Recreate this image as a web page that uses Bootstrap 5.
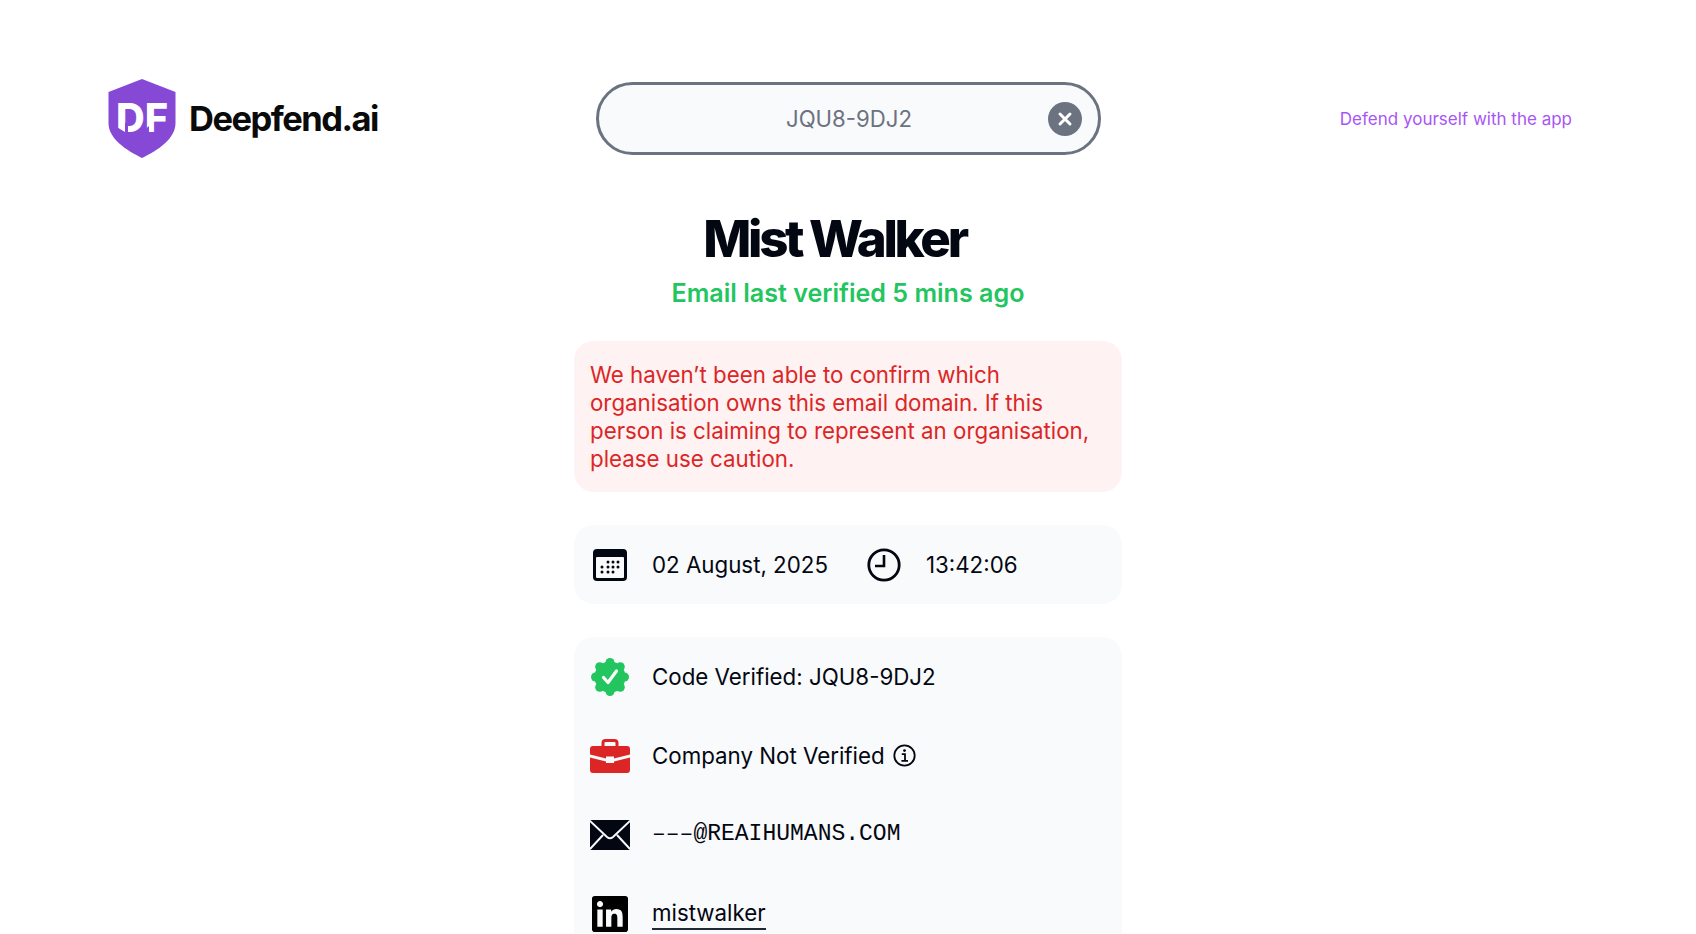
<!DOCTYPE html>
<html lang="en">
<head>
    <meta charset="UTF-8">
    <title>Deepfend.ai - Mist Walker</title>
    <meta name="viewport" content="width=device-width, initial-scale=1.0">
    <link href="https://cdn.jsdelivr.net/npm/bootstrap@5.3.0/dist/css/bootstrap.min.css" rel="stylesheet">
    <style>
        body {
            background: #fff;
            color: #030712;
            font-family: Inter, "Liberation Sans", sans-serif;
        }
        .top-bar {
            display: grid;
            grid-template-columns: 1fr auto 1fr;
            align-items: center;
            padding: 79px 124px 0 108px;
        }
        .brand-name {
            font-size: 34.5px;
            font-weight: 700;
            letter-spacing: -1.5px;
            color: #0a0a0a;
            margin-left: 5px;
        }
        .code-search {
            width: 505px;
            height: 73px;
            border: 3px solid #6b7280;
            border-radius: 37px;
            background: #f9fafb;
            color: #6b7280;
            font-size: 22.2px;
            margin-left: 16px;
            padding-left: 2px;
        }
        .clear-btn {
            position: absolute;
            right: 16px;
            top: 50%;
            transform: translateY(-50%);
            width: 34px;
            height: 34px;
            border: 0;
            border-radius: 50%;
            background: #6b7280;
            padding: 0;
        }
        .app-link {
            color: #a855f7;
            font-size: 17px;
            text-decoration: none;
            position: relative;
            top: 1px;
        }
        .person-name {
            font-size: 51px;
            font-weight: 800;
            letter-spacing: -3.3px;
            line-height: 60px;
            margin: 19px 27px 0 0;
            color: #030712;
        }
        .verified-line {
            color: #22c55e;
            font-size: 25.1px;
            font-weight: 600;
            line-height: 38px;
            margin: 5px 0 0;
        }
        .info-column {
            width: 548px;
            margin: 0 auto;
        }
        .warn-box {
            background: #fef2f2;
            color: #dc2626;
            border-radius: 20px;
            padding: 20px 16px 19px;
            font-size: 22.3px;
            line-height: 28px;
            margin-top: 29px;
        }
        .soft-box {
            background: #f9fafb;
            border-radius: 20px;
            padding: 0 16px;
            margin-top: 33px;
            font-size: 22.3px;
        }
        .date-row {
            height: 79px;
        }
        .info-row {
            height: 79px;
        }
        .icon-slot {
            width: 40px;
            margin-right: 22px;
            flex-shrink: 0;
        }
        .clock-icon {
            margin: 0 25px 0 39px;
        }
        .mono-text {
            font-family: "Liberation Mono", monospace;
            font-size: 23px;
        }
        .profile-link {
            color: #030712;
            text-decoration: none;
            border-bottom: 2px solid #1f2937;
            line-height: 30px;
        }
        .logo-letters {
            font-family: Inter, sans-serif;
            font-size: 40px;
            font-weight: 800;
            fill: #fff;
        }
    </style>
</head>
<body>

    <div class="top-bar">
        <div class="d-flex align-items-center">
            <svg width="68" height="79" viewBox="0 0 68 79" class="me-2 flex-shrink-0">
                <path d="M34 0 L67.5 13 V44 C67.5 60 50 71 34 79 C18 71 .5 60 .5 44 V13 Z" fill="#8649d6"/>
                <text x="8" y="53" class="logo-letters" textLength="52" lengthAdjust="spacingAndGlyphs">DF</text>
                <!-- stencil cuts of the mark -->
                <path d="M7 47 L17 53 V55 H7 Z M17 44 H20 V54 H17 Z M34 55 V53 L41 47 V55 Z" fill="#8649d6"/>
            </svg>
            <span class="brand-name">Deepfend.ai</span>
        </div>
        <div class="code-search position-relative d-flex align-items-center justify-content-center">
            <span>JQU8-9DJ2</span>
            <button class="clear-btn d-flex align-items-center justify-content-center" type="button" aria-label="Clear">
                <svg width="16" height="16" viewBox="0 0 16 16"><path d="M3 3 L13 13 M13 3 L3 13" stroke="#fff" stroke-width="3" stroke-linecap="round"/></svg>
            </button>
        </div>
        <div class="text-end"><a href="#" class="app-link">Defend yourself with the app</a></div>
    </div>

    <div class="text-center mt-4 pt-2">
        <h1 class="person-name">Mist Walker</h1>
        <p class="verified-line">Email last verified 5 mins ago</p>
    </div>

    <div class="info-column pb-4">
        <div class="warn-box">We haven’t been able to confirm which organisation owns this email domain. If this person is claiming to represent an organisation, please use caution.</div>

        <div class="soft-box d-flex align-items-center date-row">
            <span class="icon-slot d-flex justify-content-center">
                <svg width="34" height="32" viewBox="0 0 34 32">
                    <rect width="34" height="32" rx="4" fill="#030712"/>
                    <rect x="3" y="8" width="28" height="21" rx="1" fill="#f9fafb"/>
                    <g fill="#030712">
                        <circle cx="15" cy="13" r="1.5"/><circle cx="20" cy="13" r="1.5"/><circle cx="25" cy="13" r="1.5"/>
                        <circle cx="9" cy="18" r="1.5"/><circle cx="15" cy="18" r="1.5"/><circle cx="20" cy="18" r="1.5"/><circle cx="25" cy="18" r="1.5"/>
                        <circle cx="9" cy="23" r="1.5"/><circle cx="15" cy="23" r="1.5"/><circle cx="20" cy="23" r="1.5"/>
                    </g>
                </svg>
            </span>
            <span>02 August, 2025</span>
            <svg width="34" height="34" viewBox="0 0 34 34" class="flex-shrink-0 clock-icon">
                <circle cx="17" cy="17" r="15.2" fill="none" stroke="#030712" stroke-width="2.8"/>
                <path d="M17 7 V18 H8" fill="none" stroke="#030712" stroke-width="2.6"/>
            </svg>
            <span>13:42:06</span>
        </div>

        <div class="soft-box">
            <div class="d-flex align-items-center info-row">
                <span class="icon-slot d-flex justify-content-center">
                    <svg width="38" height="38" viewBox="0 0 38 38">
                        <g fill="#22c55e">
                            <circle cx="19" cy="19" r="15.5"/>
                            <circle cx="19" cy="4.5" r="4.5"/><circle cx="19" cy="33.5" r="4.5"/><circle cx="4.5" cy="19" r="4.5"/><circle cx="33.5" cy="19" r="4.5"/>
                            <circle cx="8.7" cy="8.7" r="4.5"/><circle cx="29.3" cy="8.7" r="4.5"/><circle cx="8.7" cy="29.3" r="4.5"/><circle cx="29.3" cy="29.3" r="4.5"/>
                        </g>
                        <path d="M12.5 19.5 L17 24.5 L25.5 13" fill="none" stroke="#fff" stroke-width="3.2" stroke-linecap="round" stroke-linejoin="round"/>
                    </svg>
                </span>
                <span>Code Verified: JQU8-9DJ2</span>
            </div>
            <div class="d-flex align-items-center info-row">
                <span class="icon-slot d-flex justify-content-center">
                    <svg width="40" height="34" viewBox="0 0 40 34">
                        <path d="M13 8 V4 Q13 1.5 15.5 1.5 H24.5 Q27 1.5 27 4 V8" fill="none" stroke="#dc2626" stroke-width="3"/>
                        <path d="M3 7 H37 Q40 7 40 10 V15.5 L24 19.5 V17.5 H16 V19.5 L0 15.5 V10 Q0 7 3 7 Z" fill="#dc2626"/>
                        <path d="M0 18.5 L16 22.5 V24 H24 V22.5 L40 18.5 V31 Q40 34 37 34 H3 Q0 34 0 31 Z" fill="#dc2626"/>
                    </svg>
                </span>
                <span>Company Not Verified</span>
                <svg width="23" height="23" viewBox="0 0 23 23" class="ms-2 flex-shrink-0">
                    <circle cx="11.5" cy="11.5" r="10.2" fill="none" stroke="#030712" stroke-width="1.8"/>
                    <circle cx="11.5" cy="6.6" r="1.4" fill="#030712"/>
                    <path d="M8.8 10.2 H12 V16.6 M8.4 16.8 H15" fill="none" stroke="#030712" stroke-width="1.8"/>
                </svg>
            </div>
            <div class="d-flex align-items-center info-row">
                <span class="icon-slot d-flex justify-content-center">
                    <svg width="40" height="30" viewBox="0 0 40 30">
                        <rect width="40" height="30" rx="1.5" fill="#030712"/>
                        <path d="M0 1 L17 17 Q20 19.5 23 17 L40 1 M0 29 L13 15 M40 29 L27 15" fill="none" stroke="#f9fafb" stroke-width="2"/>
                    </svg>
                </span>
                <span class="mono-text">–––@REAIHUMANS.COM</span>
            </div>
            <div class="d-flex align-items-center info-row">
                <span class="icon-slot d-flex justify-content-center">
                    <svg width="36" height="36" viewBox="0 0 24 24"><path fill="#000" d="M20.447 20.452h-3.554v-5.569c0-1.328-.027-3.037-1.852-3.037-1.853 0-2.136 1.445-2.136 2.939v5.667H9.351V9h3.414v1.561h.046c.477-.9 1.637-1.85 3.37-1.85 3.601 0 4.267 2.37 4.267 5.455v6.286zM5.337 7.433c-1.144 0-2.063-.926-2.063-2.065 0-1.138.92-2.063 2.063-2.063 1.14 0 2.064.925 2.064 2.063 0 1.139-.925 2.065-2.064 2.065zm1.782 13.019H3.555V9h3.564v11.452zM22.225 0H1.771C.792 0 0 .774 0 1.729v20.542C0 23.227.792 24 1.771 24h20.451C23.2 24 24 23.227 24 22.271V1.729C24 .774 23.2 0 22.222 0h.003z"/></svg>
                </span>
                <a href="#" class="profile-link">mistwalker</a>
            </div>
        </div>
    </div>

<script src="https://cdn.jsdelivr.net/npm/bootstrap@5.3.0/dist/js/bootstrap.bundle.min.js"></script>
</body>
</html>
